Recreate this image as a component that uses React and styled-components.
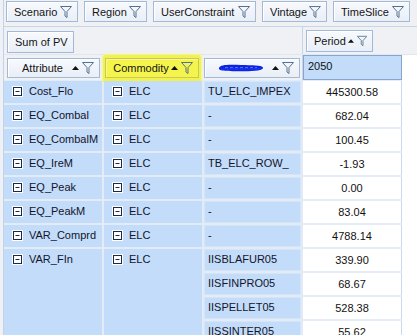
import React from 'react';
import styled, { createGlobalStyle } from 'styled-components';

const GlobalStyle = createGlobalStyle`
  html, body {
    margin: 0;
    padding: 0;
  }
  body {
    width: 417px;
    height: 335px;
    overflow: hidden;
    background: #eef1f6;
    font-family: "Liberation Sans", Arial, sans-serif;
    font-size: 11px;
    color: #111;
  }
`;

const Panel = styled.div`
  margin-left: 3px;
  border-left: 1px solid #c3d2e6;
  height: 335px;
  background: #eff1f5;
  overflow: hidden;
`;

const FilterBar = styled.div`
  display: flex;
  gap: 6px;
  height: 25px;
  padding: 1px 0 0 2px;
  border-bottom: 1px solid #c8d5e6;
`;

const FieldButton = styled.div`
  box-sizing: border-box;
  display: flex;
  align-items: center;
  width: ${(p) => p.$w}px;
  height: ${(p) => p.$h || 21}px;
  padding: 0 5px 0 7px;
  gap: 2px;
  border: 1px solid ${(p) => (p.$hot ? '#c9c95a' : '#a3b9d6')};
  background: ${(p) =>
    p.$hot ? '#f4f44c' : 'linear-gradient(#f7f9fd, #e9eff7)'};
  box-shadow: inset 1px 1px 0 ${(p) => (p.$hot ? '#f8f890' : '#ffffff')};
  white-space: nowrap;
  color: #141414;
`;

const Label = styled.span`
  flex: ${(p) => (p.$center ? 1 : 'none')};
  text-align: ${(p) => (p.$center ? 'center' : 'left')};
  margin-right: ${(p) => (p.$center ? 0 : 'auto')};
  display: flex;
  justify-content: ${(p) => (p.$center ? 'center' : 'flex-start')};
`;

const Section = styled.div`
  display: flex;
  height: ${(p) => p.$h}px;
  border-bottom: ${(p) => (p.$line ? '1px solid #e1e7f0' : 'none')};
`;

const LeftPane = styled.div`
  box-sizing: border-box;
  width: 299px;
  flex: none;
  display: flex;
  gap: ${(p) => p.$gap || 0}px;
  padding: ${(p) => p.$pad};
  border-right: 1px solid #c6d4e7;
  background: #eff1f5;
`;

const RightPane = styled.div`
  flex: 1;
  display: flex;
  padding: ${(p) => p.$pad || 0};
  background: ${(p) => p.$bg || '#eff1f5'};
`;

const Highlight = styled.div`
  display: flex;
  margin: -3px -2px;
  padding: 3px 2px;
  border-radius: 3px;
  background: #f2f24e;
  box-shadow: 0 0 2px 1px #f6f686;
`;

const ColumnHead = styled.div`
  box-sizing: border-box;
  width: 99px;
  height: 25px;
  padding: 3px 4px;
  border: 1px solid #86a5cf;
  background: #c2dcfa;
  line-height: 14px;
`;

const DataArea = styled.div`
  background: #ffffff;
  height: 260px;
`;

const Grid = styled.div`
  display: grid;
  width: max-content;
  grid-template-columns: 98px 98px 97px 99px;
  grid-auto-rows: 22px;
  gap: 2px;
  padding-top: 1px;
  background: #e3ebf6;
`;

const HeadCell = styled.div`
  grid-row: span ${(p) => p.$span || 1};
  display: flex;
  align-items: flex-start;
  gap: 6px;
  padding: 3px 0 0 8px;
  background: #c2dcfa;
  line-height: 14px;
  color: #14142a;
`;

const ItemCell = styled.div`
  padding: 3px 0 0 4px;
  background: #c2dcfa;
  box-shadow: inset 0 0 0 1px #d4e5fa;
  line-height: 14px;
  color: #14142a;
`;

const ValueCell = styled.div`
  box-sizing: border-box;
  padding-top: 4px;
  background: #ffffff;
  border-right: 1px solid #c9daef;
  text-align: center;
  line-height: 14px;
  color: #111;
`;

const Funnel = () => (
  <svg width="12" height="12" viewBox="0 0 12 12">
    <path
      d="M0.5 0.5 H11.5 L7 5.5 V11.5 L5 10 V5.5 Z"
      fill="none"
      stroke="#56708f"
      strokeLinejoin="round"
    />
  </svg>
);

const SortUp = () => (
  <svg width="7" height="4" viewBox="0 0 7 4" style={{ marginRight: 1 }}>
    <path d="M0 4 L3.5 0 L7 4 Z" fill="#111" />
  </svg>
);

const Collapse = () => (
  <svg width="11" height="11" viewBox="0 0 11 11" style={{ marginTop: 2, flex: 'none' }}>
    <rect x="0" y="0" width="11" height="11" fill="#ffffff" />
    <rect x="1.5" y="1.5" width="8" height="8" fill="#ffffff" stroke="#1d2a45" />
    <line x1="3.5" y1="5.5" x2="7.5" y2="5.5" stroke="#1d2a45" />
  </svg>
);

const Scribble = () => (
  <svg width="48" height="10" viewBox="0 0 48 10">
    <path
      d="M2 5 C3 1 14 1.5 24 2 C34 2.3 45 2 46 4.5 C47 7.5 36 8.5 24 8.3 C12 8 1 8.5 2 5 Z"
      fill="#0b24e4"
    />
    <path d="M8 4.6 H40" stroke="#6f86ff" strokeWidth="0.8" strokeDasharray="3 2" />
    <path d="M4 6.2 C14 5.6 30 6.4 44 5.8" stroke="#2c48ff" strokeWidth="0.6" fill="none" />
  </svg>
);

const filters = [
  ['Scenario', 72],
  ['Region', 63],
  ['UserConstraint', 103],
  ['Vintage', 65],
  ['TimeSlice', 77],
];

const rows = [
  { attr: 'Cost_Flo', items: [['TU_ELC_IMPEX', '445300.58']] },
  { attr: 'EQ_Combal', items: [['-', '682.04']] },
  { attr: 'EQ_CombalM', items: [['-', '100.45']] },
  { attr: 'EQ_IreM', items: [['TB_ELC_ROW_', '-1.93']] },
  { attr: 'EQ_Peak', items: [['-', '0.00']] },
  { attr: 'EQ_PeakM', items: [['-', '83.04']] },
  { attr: 'VAR_Comprd', items: [['-', '4788.14']] },
  {
    attr: 'VAR_FIn',
    items: [
      ['IISBLAFUR05', '339.90'],
      ['IISFINPRO05', '68.67'],
      ['IISPELLET05', '528.38'],
      ['IISSINTER05', '55.62'],
    ],
  },
];

const App = () => {
  return (
    <>
      <GlobalStyle />
      <Panel>
        <FilterBar>
          {filters.map(([name, w]) => (
            <FieldButton key={name} $w={w}>
              <Label>{name}</Label>
              <Funnel />
            </FieldButton>
          ))}
        </FilterBar>

        <Section $h={27} $line>
          <LeftPane $pad="4px 0 0 3px">
            <FieldButton $w={67} $h={22}>
              <Label>Sum of PV</Label>
            </FieldButton>
          </LeftPane>
          <RightPane $pad="3px 0 0 3px">
            <FieldButton $w={67} $h={22}>
              <Label>Period</Label>
              <SortUp />
              <Funnel />
            </FieldButton>
          </RightPane>
        </Section>

        <Section $h={25}>
          <LeftPane $pad="3px 0 0 3px" $gap={5}>
            <FieldButton $w={93} $h={20}>
              <Label $center>Attribute</Label>
              <SortUp />
              <Funnel />
            </FieldButton>
            <Highlight>
              <FieldButton $w={94} $h={20} $hot>
                <Label $center>Commodity</Label>
                <SortUp />
                <Funnel />
              </FieldButton>
            </Highlight>
            <FieldButton $w={96} $h={20}>
              <Label $center>
                <Scribble />
              </Label>
              <SortUp />
              <Funnel />
            </FieldButton>
          </LeftPane>
          <RightPane $bg="#ffffff">
            <ColumnHead>2050</ColumnHead>
          </RightPane>
        </Section>

        <DataArea>
          <Grid>
            {rows.map((row) => (
              <React.Fragment key={row.attr}>
                <HeadCell $span={row.items.length}>
                  <Collapse />
                  {row.attr}
                </HeadCell>
                <HeadCell $span={row.items.length}>
                  <Collapse />
                  ELC
                </HeadCell>
                {row.items.map(([item, value]) => (
                  <React.Fragment key={item + value}>
                    <ItemCell>{item}</ItemCell>
                    <ValueCell>{value}</ValueCell>
                  </React.Fragment>
                ))}
              </React.Fragment>
            ))}
          </Grid>
        </DataArea>
      </Panel>
    </>
  );
};

export default App;
